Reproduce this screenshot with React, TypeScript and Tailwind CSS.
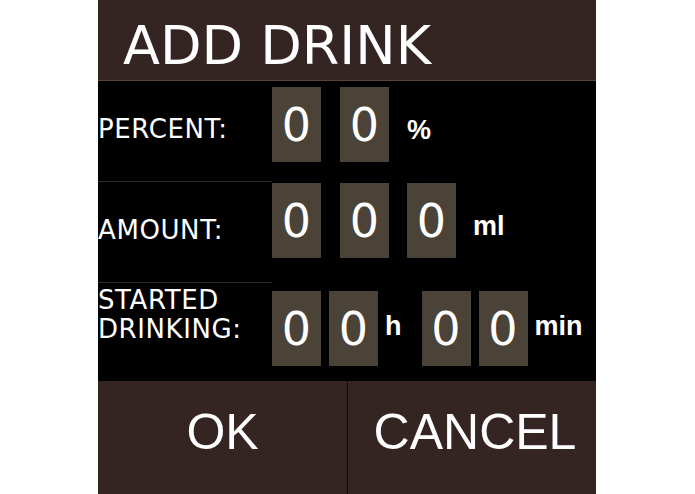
import React from 'react';

const dejavu = { fontFamily: '"DejaVu Sans", Verdana, sans-serif' };
const arial = { fontFamily: '"Liberation Sans", Arial, sans-serif' };

const Digit = ({ value, className = '' }: { value: string; className?: string }) => (
    <div className={`w-[49px] h-[75px] bg-[#4b4238] flex items-center justify-center text-[46px] leading-none text-white shrink-0 ${className}`}>
        {value}
    </div>
);

const Label = ({ children, bordered, className = '' }: { children: React.ReactNode; bordered?: boolean; className?: string }) => (
    <div className={`w-[174px] h-full shrink-0 text-[26px] tracking-[0.6px] text-white ${bordered ? 'border-b border-[#2c2c2c]' : ''} ${className}`}>
        {children}
    </div>
);

const Unit = ({ children, className = '' }: { children: React.ReactNode; className?: string }) => (
    <span className={`text-[27px] font-bold leading-[30px] text-white ${className}`} style={arial}>{children}</span>
);

const App = () => {
    return (
        <div className="w-[695px] h-[494px] bg-white overflow-hidden" style={dejavu}>
            <div className="ml-[98px] w-[498px] h-[494px] flex flex-col bg-black">
                {/* ---header-------- */}
                <div className="h-[81px] bg-[#342523] border-b border-[#5c4535] pl-[25px] pt-[19px] shrink-0">
                    <p className="text-[54px] leading-[54px] text-white">ADD DRINK</p>
                </div>

                {/* ---percent row-------- */}
                <div className="h-[101px] flex items-start">
                    <Label bordered className="pt-[33px] leading-[30px]">PERCENT:</Label>
                    <div className="flex items-start pt-[6px]">
                        <Digit value="0" />
                        <Digit value="0" className="ml-[19px]" />
                        <Unit className="ml-[18px] mt-[28px]">%</Unit>
                    </div>
                </div>

                {/* ---amount row-------- */}
                <div className="h-[101px] flex items-start">
                    <Label bordered className="pt-[33px] leading-[30px]">AMOUNT:</Label>
                    <div className="flex items-start pt-[1px]">
                        <Digit value="0" />
                        <Digit value="0" className="ml-[19px]" />
                        <Digit value="0" className="ml-[18px]" />
                        <Unit className="ml-[17px] mt-[28px]">ml</Unit>
                    </div>
                </div>

                {/* ---started drinking row-------- */}
                <div className="h-[98px] flex items-start">
                    <Label className="pt-[3px] leading-[29px]">STARTED<br />DRINKING:</Label>
                    <div className="flex items-start pt-[8px]">
                        <Digit value="0" />
                        <Digit value="0" className="ml-[8px]" />
                        <Unit className="ml-[7px] mt-[20px]">h</Unit>
                        <Digit value="0" className="ml-[20px]" />
                        <Digit value="0" className="ml-[8px]" />
                        <Unit className="ml-[7px] mt-[20px]">min</Unit>
                    </div>
                </div>

                {/* ---buttons-------- */}
                <div className="flex-1 flex bg-[#342523]" style={arial}>
                    <button className="w-[250px] h-full border-r border-[#140c0c] flex justify-center pt-[26px] text-[50px] leading-none text-white">
                        OK
                    </button>
                    <button className="flex-1 h-full flex justify-center pl-[6px] pt-[26px] text-[50px] leading-none text-white">
                        CANCEL
                    </button>
                </div>
            </div>
        </div>
    );
};

export default App;
